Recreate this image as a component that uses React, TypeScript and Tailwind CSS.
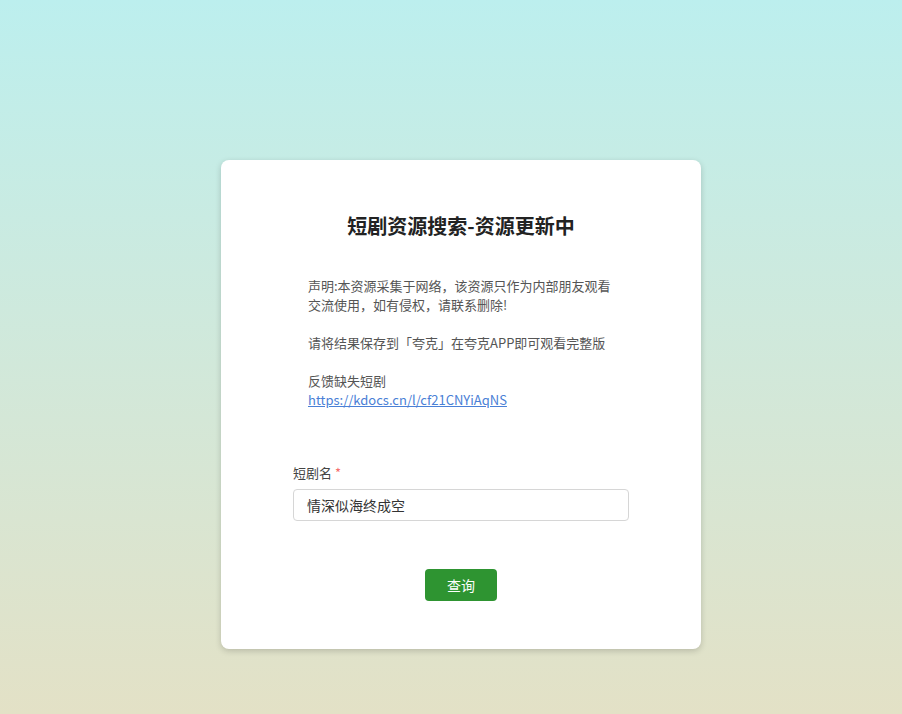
export default function App() {
  return (
    <div
      className="flex min-h-[714px] w-full justify-center bg-gradient-to-b from-[#bcefee] to-[#e3e1c6] pt-[160px] pl-[20px]"
      style={{ fontFamily: '"Microsoft YaHei", "Noto Sans CJK SC", "Noto Sans", sans-serif' }}
    >
      <div className="flex h-[489px] w-[480px] flex-col items-center rounded-[8px] bg-white shadow-[0_2px_6px_rgba(0,0,0,0.18)]">
        <h1 className="mt-[50px] text-[20px] leading-[32px] font-bold text-[#222]">短剧资源搜索-资源更新中</h1>

        <div className="mt-[34px] w-[306px] text-[13px] leading-[19px] text-[#555]">
          <p>
            声明:本资源采集于网络，该资源只作为内部朋友观看
            <br />
            交流使用，如有侵权，请联系删除!
          </p>
          <p className="mt-[19px]">请将结果保存到「夸克」在夸克APP即可观看完整版</p>
          <p className="mt-[19px]">反馈缺失短剧</p>
          <a href="#" className="text-[#4a80d6] underline">
            https://kdocs.cn/l/cf21CNYiAqNS
          </a>
        </div>

        <div className="mt-[55px] w-[336px]">
          <label className="block text-[13px] leading-[18px] text-[#444]">
            短剧名 <span className="text-[#f56c6c]">*</span>
          </label>
          <input
            defaultValue="情深似海终成空"
            className="mt-[7px] h-[32px] w-full rounded-[4px] border border-[#d6d6d6] px-[13px] text-[14px] text-[#333] outline-none"
          />
        </div>

        <button className="mt-[48px] h-[32px] w-[72px] rounded-[4px] bg-[#2e9431] text-[14px] text-white">
          查询
        </button>
      </div>
    </div>
  );
}
